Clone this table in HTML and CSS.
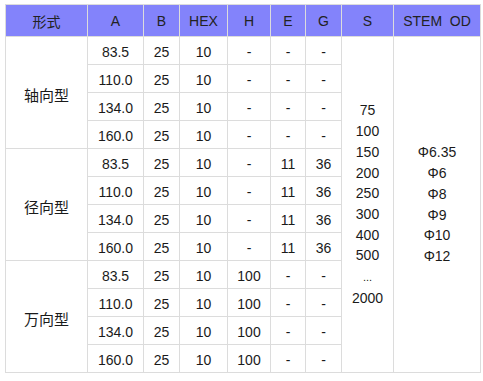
FILE: index.html
```html
<!DOCTYPE html>
<html>
<head>
<meta charset="utf-8">
<link rel="stylesheet" href="styles.css">
</head>
<body>
<table class="spec">
  <colgroup>
    <col class="c-form"><col class="c-a"><col class="c-b"><col class="c-hex"><col class="c-h"><col class="c-e"><col class="c-g"><col class="c-s"><col class="c-od">
  </colgroup>
  <thead>
    <tr><th>形式</th><th>A</th><th>B</th><th>HEX</th><th>H</th><th>E</th><th>G</th><th>S</th><th>STEM&nbsp;&nbsp;OD</th></tr>
  </thead>
  <tbody>
    <tr><td rowspan="4" class="form">轴向型</td><td>83.5</td><td>25</td><td>10</td><td>-</td><td>-</td><td>-</td>
      <td rowspan="12" class="list">75<br>100<br>150<br>200<br>250<br>300<br>400<br>500<br><span class="dots">...</span><br>2000</td>
      <td rowspan="12" class="list od">Φ6.35<br>Φ6<br>Φ8<br>Φ9<br>Φ10<br>Φ12</td></tr>
    <tr><td>110.0</td><td>25</td><td>10</td><td>-</td><td>-</td><td>-</td></tr>
    <tr><td>134.0</td><td>25</td><td>10</td><td>-</td><td>-</td><td>-</td></tr>
    <tr><td>160.0</td><td>25</td><td>10</td><td>-</td><td>-</td><td>-</td></tr>
    <tr><td rowspan="4" class="form">径向型</td><td>83.5</td><td>25</td><td>10</td><td>-</td><td>11</td><td>36</td></tr>
    <tr><td>110.0</td><td>25</td><td>10</td><td>-</td><td>11</td><td>36</td></tr>
    <tr><td>134.0</td><td>25</td><td>10</td><td>-</td><td>11</td><td>36</td></tr>
    <tr><td>160.0</td><td>25</td><td>10</td><td>-</td><td>11</td><td>36</td></tr>
    <tr><td rowspan="4" class="form">万向型</td><td>83.5</td><td>25</td><td>10</td><td>100</td><td>-</td><td>-</td></tr>
    <tr><td>110.0</td><td>25</td><td>10</td><td>100</td><td>-</td><td>-</td></tr>
    <tr><td>134.0</td><td>25</td><td>10</td><td>100</td><td>-</td><td>-</td></tr>
    <tr><td>160.0</td><td>25</td><td>10</td><td>100</td><td>-</td><td>-</td></tr>
  </tbody>
</table>
</body>
</html>
```
FILE: styles.css
```css
html, body {
  margin: 0;
  padding: 0;
  background: #fff;
}
body {
  padding: 4px 0 0 5px;
  font-family: "Liberation Sans", Arial, "Noto Sans CJK SC", sans-serif;
  font-size: 14px;
  color: #1a1a1a;
}
.spec {
  border-collapse: collapse;
  table-layout: fixed;
  width: 475px;
}
.c-form { width: 82px; }
.c-a { width: 56px; }
.c-b { width: 36px; }
.c-hex { width: 48px; }
.c-h { width: 43px; }
.c-e { width: 35px; }
.c-g { width: 36px; }
.c-s { width: 52px; }
.c-od { width: 87px; }
.spec th, .spec td {
  border: 1px solid #dcdcdc;
  padding: 0;
  text-align: center;
  vertical-align: middle;
  white-space: nowrap;
}
.spec th {
  background: #8383fb;
  color: #222;
  font-weight: normal;
  height: 31px;
}
.spec tbody tr {
  height: 28px;
}
.spec td {
  padding-top: 3px;
}
.form {
  font-family: "Noto Sans CJK SC", sans-serif;
  font-size: 15px;
}
.list {
  line-height: 20.7px;
}
.spec td.list {
  padding-top: 0;
}
.dots {
  font-size: 11px;
}
```
